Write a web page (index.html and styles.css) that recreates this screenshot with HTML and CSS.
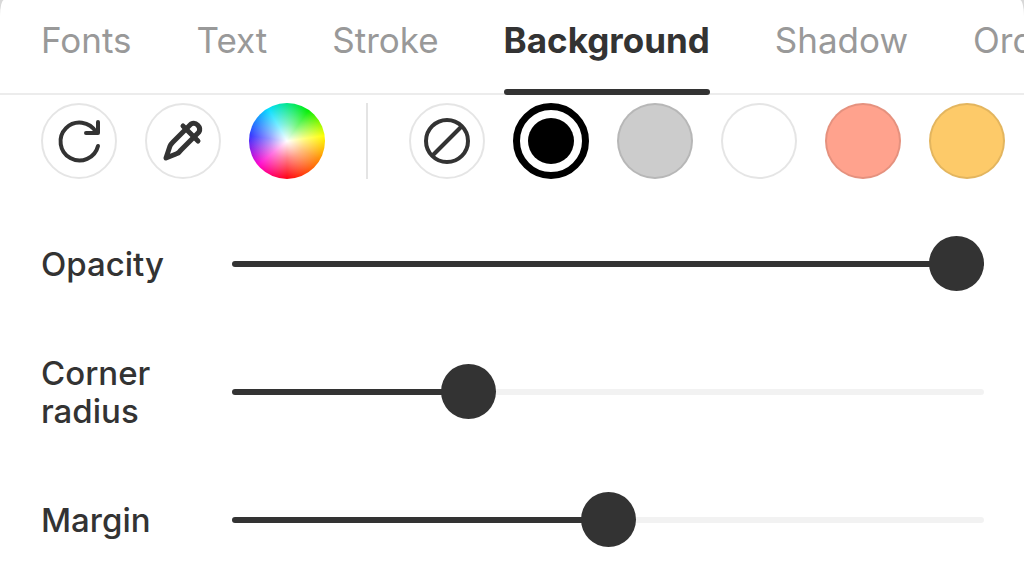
FILE: index.html
```
<!DOCTYPE html>
<html lang="en">
  <head>
    <meta charset="UTF-8" />
    <meta name="viewport" content="width=device-width, initial-scale=1.0" />
    <title>Text background</title>
    <link rel="stylesheet" href="styles.css">
  </head>
  <body>
    <main class="panel">
      <nav class="tabs">
        <button class="tab">Fonts</button>
        <button class="tab">Text</button>
        <button class="tab">Stroke</button>
        <button class="tab active">Background</button>
        <button class="tab">Shadow</button>
        <button class="tab">Order</button>
      </nav>

      <div class="colors">
        <button class="tool" aria-label="Reset">
          <svg viewBox="0 0 76 76">
            <path d="M57 43A19 19 0 1 1 55 29" />
            <path d="M57 19V30H45" />
          </svg>
        </button>
        <button class="tool" aria-label="Pick color">
          <svg class="dropper" viewBox="0 0 76 76">
            <path d="M21 55L25 43Q26 41 28 39L46 21A6 6 0 0 1 54 29L36 47Q34 50 31 51Z" />
            <path d="M38 23L53 38" />
          </svg>
        </button>
        <button class="tool wheel" aria-label="Color wheel"></button>
        <span class="divider"></span>
        <button class="tool" aria-label="No background">
          <svg viewBox="0 0 76 76">
            <circle cx="38" cy="38" r="21" />
            <path d="M24 52L52 24" />
          </svg>
        </button>
        <input class="swatch black" type="radio" name="color" aria-label="Black" checked />
        <input class="swatch gray" type="radio" name="color" aria-label="Gray" />
        <input class="swatch white" type="radio" name="color" aria-label="White" />
        <input class="swatch salmon" type="radio" name="color" aria-label="Salmon" />
        <input class="swatch yellow" type="radio" name="color" aria-label="Yellow" />
      </div>

      <div class="sliders">
        <div class="row">
          <label for="opacity">Opacity</label>
          <input type="range" id="opacity" value="100" style="--value: 100%" />
        </div>
        <div class="row">
          <label for="radius">Corner radius</label>
          <input type="range" id="radius" value="30" style="--value: 30%" />
        </div>
        <div class="row">
          <label for="margin">Margin</label>
          <input type="range" id="margin" value="50" style="--value: 50%" />
        </div>
      </div>
    </main>
    <script>
      document.querySelectorAll("input[type=range]").forEach((slider) => {
        slider.addEventListener("input", () => {
          slider.style.setProperty("--value", slider.value + "%");
        });
      });
    </script>
  </body>
</html>
```
FILE: styles.css
```
* {
  box-sizing: border-box;
}
body {
  margin: 0;
  background: #d8d8d8;
  color: #333;
  font-family: Inter, "Liberation Sans", sans-serif;
}
.panel {
  min-height: 100vh;
  overflow: hidden;
  background: #fff;
  border-radius: 4px 4px 0 0 / 16px 16px 0 0;
}
button {
  padding: 0;
  border: none;
  background: none;
  color: inherit;
  font: inherit;
  cursor: pointer;
}
.tabs {
  display: flex;
  gap: 65px;
  height: 95px;
  padding-left: 41px;
  overflow: hidden;
  box-shadow: inset 0 -2px #ececec;
}
.tab {
  flex: none;
  display: flex;
  flex-direction: column;
  justify-content: space-between;
  padding-top: 19px;
  color: #999;
  font-size: 35px;
  line-height: 42px;
}
.tab::after {
  content: "";
  width: 100%;
  height: 6px;
  border-radius: 3px;
}
.tab.active {
  color: #333;
  font-weight: 700;
}
.tab.active::after {
  background: #333;
}
.colors {
  display: flex;
  gap: 28px;
  padding: 8px 0 0 41px;
  overflow: hidden;
}
.tool,
.swatch {
  flex: none;
  width: 76px;
  height: 76px;
  margin: 0;
  border: 2px solid rgba(0, 0, 0, 0.1);
  border-radius: 50%;
  cursor: pointer;
}
.tool svg {
  display: block;
  width: 76px;
  height: 76px;
  margin: -2px;
  fill: none;
  stroke: #333;
  stroke-width: 4;
  stroke-linecap: round;
  stroke-linejoin: round;
}
.tool .dropper {
  stroke-width: 5;
}
.wheel {
  border: none;
  background:
    radial-gradient(closest-side, #fff, rgba(255, 255, 255, 0.5) 45%, rgba(255, 255, 255, 0)),
    conic-gradient(#00e68a, #0e0 35deg, #ff0 82deg, #f80 120deg, #f01 180deg, #f0c 230deg, #33f 278deg, #0df 330deg, #00e68a);
}
.divider {
  width: 2px;
  margin: 0 13px;
  background: #e4e4e4;
}
.swatch {
  appearance: none;
}
.swatch:checked {
  padding: 8px;
  border: 7px solid #000;
  background-clip: content-box;
}
.black {
  background-color: #000;
}
.gray {
  background-color: #ccc;
}
.white {
  background-color: #fff;
}
.salmon {
  background-color: #ffa28d;
}
.yellow {
  background-color: #fdca69;
}
.sliders {
  display: grid;
  gap: 52px;
  padding: 47px 40px 16px 41px;
}
.row {
  display: grid;
  grid-template-columns: 135px 1fr;
  gap: 56px;
  align-items: center;
  min-height: 76px;
}
.row label {
  font-size: 33px;
  font-weight: 500;
  line-height: 38px;
}
.row input {
  appearance: none;
  width: 100%;
  height: 55px;
  margin: 0;
  background: none;
  cursor: pointer;
}
.row input::-webkit-slider-runnable-track {
  height: 6px;
  border-radius: 3px;
  background: linear-gradient(to right, #333 var(--value), #f2f2f2 var(--value));
}
.row input::-webkit-slider-thumb {
  appearance: none;
  width: 55px;
  height: 55px;
  margin-top: -25px;
  border-radius: 50%;
  background: #333;
}
```
